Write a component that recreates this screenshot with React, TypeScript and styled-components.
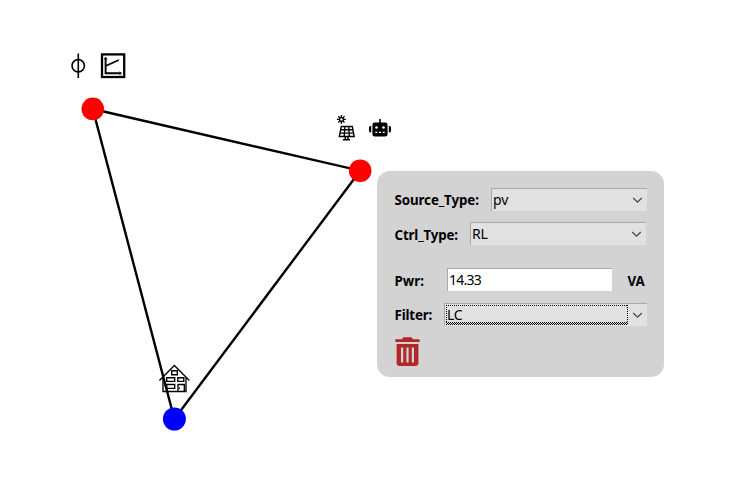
import React from 'react';
import styled, { createGlobalStyle } from 'styled-components';

const GlobalStyle = createGlobalStyle`
  *, *::before, *::after { box-sizing: border-box; }
  body { margin: 0; background: #fff; overflow: hidden; }
`;

const Canvas = styled.main`
  position: relative;
  width: 738px;
  height: 481px;
  background: #fff;
  font-family: 'Noto Sans', 'Open Sans', sans-serif;
  color: #000;
`;

const Diagram = styled.svg`
  display: block;
`;

const Panel = styled.section`
  position: absolute;
  left: 377.4px;
  top: 171px;
  width: 286.4px;
  height: 206px;
  padding: 17px 17px 0 17.1px;
  border-radius: 13px;
  background: #d3d3d3;
`;

const Row = styled.div<{ $gap: number }>`
  display: flex;
  align-items: flex-start;
  height: 23px;
  margin-bottom: ${(p) => p.$gap}px;
`;

const Label = styled.label<{ $width: number; $spacing?: number; $drop?: number }>`
  flex: none;
  width: ${(p) => p.$width}px;
  padding-top: ${(p) => p.$drop ?? 1}px;
  font-size: 13.33px;
  line-height: 23px;
  font-weight: 700;
  letter-spacing: ${(p) => p.$spacing ?? 0}px;
  white-space: nowrap;
`;

const Field = styled.div<{ $width: number; $white?: boolean }>`
  display: flex;
  align-items: center;
  justify-content: space-between;
  flex: none;
  width: ${(p) => p.$width}px;
  height: 23px;
  padding-right: ${(p) => (p.$white ? 0 : 4)}px;
  border-top: 1px solid #a9a9a9;
  border-left: 1px solid #a9a9a9;
  background: ${(p) => (p.$white ? '#fff' : '#e1e1e1')};
`;

const Value = styled.span<{ $spacing?: number; $inset?: number }>`
  flex: 1;
  height: 19px;
  margin-left: 1px;
  padding-left: ${(p) => p.$inset ?? 0}px;
  font-size: 14px;
  line-height: 18px;
  letter-spacing: ${(p) => p.$spacing ?? -0.3}px;
`;

/* Keyboard focus ring: dotted on three sides, a checkered strip underneath. */
const FocusedValue = styled(Value)`
  height: 20px;
  margin-right: 4px;
  padding: 0 1px;
  line-height: 20px;
  background:
    repeating-linear-gradient(90deg, #000 0 1px, transparent 1px 2px) 0 0 / 100% 1px no-repeat,
    repeating-linear-gradient(180deg, #000 0 1px, transparent 1px 2px) 0 0 / 1px 17px no-repeat,
    repeating-linear-gradient(180deg, #000 0 1px, transparent 1px 2px) 100% 0 / 1px 17px no-repeat,
    repeating-linear-gradient(90deg, #000 0 1px, transparent 1px 2px) 0 17px / 100% 1px no-repeat,
    repeating-linear-gradient(90deg, transparent 0 1px, #000 1px 2px) 0 18px / 100% 1px no-repeat,
    repeating-linear-gradient(90deg, #000 0 1px, transparent 1px 2px) 0 19px / 100% 1px no-repeat;
`;

const Unit = styled.span`
  margin-left: 15.5px;
  padding-top: 1.5px;
  font-size: 13.33px;
  line-height: 23px;
  font-weight: 700;
`;

const DeleteButton = styled.button`
  display: block;
  width: 25px;
  height: 30px;
  margin: 0 0 0 0.5px;
  padding: 0;
  border: 0;
  background: none;
  cursor: pointer;

  svg { display: block; }
`;

const Chevron = () => (
  <svg width="11" height="8" viewBox="0 0 11 8" fill="none" stroke="#444" strokeWidth="1.2">
    <path d="M1.2 2 5.5 6.2 9.8 2" />
  </svg>
);

const SourceGlyph = () => (
  <g fill="none" stroke="#000" strokeWidth="1.6">
    <path d="M78.3 53.5V78" />
    <circle cx="78.2" cy="65.7" r="6.2" />
  </g>
);

const CurveGlyph = () => (
  <g fill="none" stroke="#000" strokeWidth="1.9">
    <rect x="102" y="54.4" width="22.2" height="22.6" strokeWidth="2.3" />
    <path d="M105.6 58V73.3H120.5M105.6 66 118.8 60" />
    <path d="M104.2 59.5 105.6 57.2 107 59.5M119.5 71.9 121.5 73.3 119.5 74.7" strokeWidth="1" />
  </g>
);

const SolarGlyph = () => (
  <g fill="none" stroke="#000">
    <circle cx="341.4" cy="119.4" r="1.9" strokeWidth="1.4" />
    <path
      d="M341.4 114.9v2M341.4 121.9v2M336.9 119.4h2M343.9 119.4h2M338.3 116.3l1.4 1.4M343.1 121.1l1.4 1.4M344.5 116.3l-1.4 1.4M339.7 121.1l-1.4 1.4"
      strokeWidth="1.3"
    />
    <path
      d="M341.3 126.5H352.3L354.2 136.5H339.3ZM340.7 129.8H353M340 133.1H353.6M344.9 126.5 344.2 136.5M348.7 126.5 349.3 136.5"
      strokeWidth="1.4"
    />
    <path d="M345.3 136.5V139.5M347.9 136.5V139.5M343 139.7H350" strokeWidth="1.5" />
  </g>
);

const RobotGlyph = () => (
  <g>
    <path d="M379.2 119h1.6v3.4h4.4a2.4 2.4 0 0 1 2.4 2.4v9.4a2.2 2.2 0 0 1-2.2 2.2h-10.8a2.2 2.2 0 0 1-2.2-2.2v-9.4a2.4 2.4 0 0 1 2.4-2.4h4.4Z" />
    <path d="M371.2 126v6.5h-.8a1.4 1.4 0 0 1-1.4-1.4v-3.7a1.4 1.4 0 0 1 1.4-1.4ZM388.8 126v6.5h.8a1.4 1.4 0 0 0 1.4-1.4v-3.7a1.4 1.4 0 0 0-1.4-1.4Z" />
    <g fill="#fff">
      <circle cx="376.5" cy="127.5" r="1.3" />
      <circle cx="383.5" cy="127.5" r="1.3" />
      <path d="M375.3 131.7h2v1.2h-2ZM379 131.7h2v1.2h-2ZM382.7 131.7h2v1.2h-2Z" />
    </g>
  </g>
);

const HouseGlyph = () => (
  <g fill="none" stroke="#000" strokeWidth="1.35">
    <path d="M159.4 380.5 174.4 365.5 189.4 380.5M163 377.5V391.5H186V377.5" />
    <path d="M171.7 370.7H177.3V374.7H171.7ZM166.7 377.7H174.7V381.3H166.7ZM177.8 377.7H183.8V381.3H177.8ZM166.7 384.5H174.7V388.3H166.7ZM178 391.5V384.5H184.3V391.5" />
    <path d="M179.5 387.5V389" strokeWidth="1" />
  </g>
);

export default function App() {
  return (
    <>
      <GlobalStyle />
      <Canvas>
        <Diagram width="738" height="481" viewBox="0 0 738 481">
          <path
            d="M92.8 109 360.2 170.7 174.4 419Z"
            fill="none"
            stroke="#000"
            strokeWidth="2.4"
          />
          <circle cx="92.8" cy="108.9" r="11.3" fill="#f00" />
          <circle cx="360.2" cy="170.7" r="11.3" fill="#f00" />
          <circle cx="174.4" cy="419" r="11.5" fill="#00f" />
          <SourceGlyph />
          <CurveGlyph />
          <SolarGlyph />
          <RobotGlyph />
          <HouseGlyph />
        </Diagram>
        <Panel>
          <Row $gap={11}>
            <Label $width={96.5} $spacing={-0.1}>Source_Type:</Label>
            <Field $width={156}>
              <Value $spacing={0}>pv</Value>
              <Chevron />
            </Field>
          </Row>
          <Row $gap={23}>
            <Label $width={75.5} $spacing={-0.15} $drop={2}>Ctrl_Type:</Label>
            <Field $width={176}>
              <Value>RL</Value>
              <Chevron />
            </Field>
          </Row>
          <Row $gap={12}>
            <Label $width={52.5} $drop={2}>Pwr:</Label>
            <Field $width={165} $white>
              <Value $spacing={-0.75}>14.33</Value>
            </Field>
            <Unit>VA</Unit>
          </Row>
          <Row $gap={11}>
            <Label $width={49.5} $spacing={-0.15}>Filter:</Label>
            <Field $width={203}>
              <FocusedValue>LC</FocusedValue>
              <Chevron />
            </Field>
          </Row>
          <DeleteButton aria-label="Delete">
            <svg width="25" height="30" viewBox="0 0 25 30" fill="none">
              <path
                d="M1.2 2.2H7L8.4.3h8.2L18 2.2h5.8q1 0 1 1v.8q0 1-1 1H1.2q-1 0-1-1v-.8q0-1 1-1Z"
                fill="#b22828"
              />
              <path
                fillRule="evenodd"
                d="M1.6 7H23.4V26q0 3-3 3H4.6q-3 0-3-3ZM6 10.5V25.5H8.2V10.5ZM11.4 10.5V25.5H13.6V10.5ZM16.8 10.5V25.5H19V10.5Z"
                fill="#b22828"
              />
            </svg>
          </DeleteButton>
        </Panel>
      </Canvas>
    </>
  );
}
